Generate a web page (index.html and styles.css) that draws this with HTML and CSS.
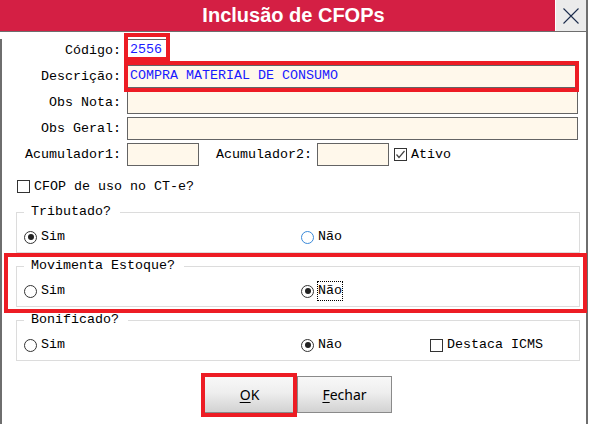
FILE: index.html
```html
<!DOCTYPE html>
<html lang="pt-BR">
<head>
<meta charset="utf-8">
<title>Inclusão de CFOPs</title>
<link rel="stylesheet" href="styles.css">
</head>
<body>
<div class="window">
  <div class="titlebar">
    <div class="title">Inclusão de CFOPs</div>
    <div class="close">
      <svg width="16" height="16" viewBox="0 0 16 16"><path d="M0.5 0.5L15.5 15.5M15.5 0.5L0.5 15.5" stroke="#1c2c4c" stroke-width="1.1" fill="none"/></svg>
    </div>
  </div>
  <div class="body">
    <div class="row first">
      <span class="label">Código:</span>
      <span class="field code">2556</span>
    </div>
    <div class="row">
      <span class="label">Descrição:</span>
      <span class="field wide">COMPRA MATERIAL DE CONSUMO</span>
    </div>
    <div class="row">
      <span class="label">Obs Nota:</span>
      <span class="field wide"></span>
    </div>
    <div class="row">
      <span class="label">Obs Geral:</span>
      <span class="field wide"></span>
    </div>
    <div class="row">
      <span class="label">Acumulador1:</span>
      <span class="field short"></span>
      <span class="label2">Acumulador2:</span>
      <span class="field short"></span>
      <span class="check checked ativo"><svg width="11" height="11" viewBox="0 0 11 11"><path d="M1.5 5.5L4 8.5L9.5 2" stroke="#444" stroke-width="1.2" fill="none"/></svg></span>
      <span class="opt-text">Ativo</span>
    </div>
    <div class="row cfop">
      <span class="check"></span>
      <span class="opt-text">CFOP de uso no CT-e?</span>
    </div>

    <fieldset class="group first-group">
      <legend>Tributado?</legend>
      <div class="options">
        <span class="opt col1"><span class="radio checked"></span><span class="opt-text">Sim</span></span>
        <span class="opt col2"><span class="radio hover"></span><span class="opt-text">Não</span></span>
      </div>
    </fieldset>

    <fieldset class="group">
      <legend>Movimenta Estoque?</legend>
      <div class="options">
        <span class="opt col1"><span class="radio"></span><span class="opt-text">Sim</span></span>
        <span class="opt col2"><span class="radio checked"></span><span class="opt-text focus">Não</span></span>
      </div>
    </fieldset>

    <fieldset class="group">
      <legend>Bonificado?</legend>
      <div class="options">
        <span class="opt col1"><span class="radio"></span><span class="opt-text">Sim</span></span>
        <span class="opt col2"><span class="radio checked"></span><span class="opt-text">Não</span></span>
        <span class="opt"><span class="check"></span><span class="opt-text">Destaca ICMS</span></span>
      </div>
    </fieldset>

    <div class="buttons">
      <button class="btn"><u>O</u>K</button>
      <button class="btn"><u>F</u>echar</button>
    </div>
  </div>

  <div class="hl hl-codigo"></div>
  <div class="hl hl-desc"></div>
  <div class="hl hl-mov"></div>
  <div class="hl hl-ok"></div>
</div>
</body>
</html>
```
FILE: styles.css
```css
* { box-sizing: border-box; }

body {
  margin: 0;
  background: #ffffff;
  font-family: "Liberation Mono", "Courier New", monospace;
  font-size: 13.33px;
  color: #000000;
}

.window {
  position: relative;
  width: 588px;
  border-right: 2px solid #6e6e6e;
}

.titlebar {
  display: flex;
  gap: 1px;
  height: 32px;
  border-bottom: 1px solid #6e6e6e;
}

.title {
  flex: 1;
  background: #d41f44;
  color: #ffffff;
  font-family: "Liberation Sans", Arial, sans-serif;
  font-weight: bold;
  font-size: 20px;
  line-height: 31px;
  text-align: center;
  padding-left: 32px;
}

.close {
  width: 30px;
  background: #ebebeb;
  display: flex;
  align-items: center;
  justify-content: center;
}

.body {
  height: 387px;
  border-left: 2px solid #6e6e6e;
  border-bottom: 2px solid #6e6e6e;
}

.row {
  display: flex;
  align-items: center;
  height: 23px;
  margin-top: 3px;
}

.row.first { margin-top: 7px; }

.label {
  width: 119px;
  margin-right: 6px;
  text-align: right;
  white-space: pre;
}

.label2 {
  margin-left: 17px;
  margin-right: 5px;
  white-space: pre;
}

.field {
  height: 23px;
  border: 1px solid #646464;
  background: #fff8eb;
  color: #1a1aff;
  padding: 2px 2px 0;
  line-height: 16px;
  white-space: pre;
  overflow: hidden;
}

.field.code { width: 40px; background: #ffffff; }
.field.wide { width: 451px; }
.field.short { width: 72px; }

.check {
  display: inline-flex;
  align-items: center;
  justify-content: center;
  width: 13px;
  height: 13px;
  border: 1px solid #333333;
  background: #ffffff;
  flex: none;
}

.check.ativo { margin-left: 5px; }

.opt-text {
  margin-left: 3px;
  border: 1px dotted transparent;
  line-height: 18px;
  white-space: pre;
}

.opt-text.focus { border-color: #000000; }

.row.cfop {
  height: 15px;
  margin-top: 13px;
  padding-left: 15px;
}

.group {
  margin: 6px 6px 0 14px;
  width: 564px;
  border: 1px solid #dcdcdc;
  padding: 0 0 6px 7px;
  min-width: 0;
}

.group.first-group { margin-top: 11px; }

.group legend {
  padding: 0 9px 0 7px;
  line-height: 14px;
  margin: 0;
}

.options {
  display: flex;
  align-items: center;
  height: 18px;
  margin-top: 9px;
}

.opt {
  display: flex;
  align-items: center;
}

.opt.col1 { width: 277px; }
.opt.col2 { width: 129px; }

.radio {
  position: relative;
  width: 13px;
  height: 13px;
  border: 1px solid #333333;
  border-radius: 50%;
  background: #ffffff;
  flex: none;
}

.radio.hover { border-color: #3b8ad9; }

.radio.checked::after {
  content: "";
  position: absolute;
  left: 2.5px;
  top: 2.5px;
  width: 6px;
  height: 6px;
  border-radius: 50%;
  background: #222222;
}

.buttons {
  display: flex;
  gap: 0;
  margin-top: 15px;
  padding-left: 200px;
}

.btn {
  width: 95px;
  height: 37px;
  border: 1px solid #8a8a8a;
  background: linear-gradient(#f8f8f8, #eeeeee 45%, #d2d2d2);
  font-family: "Noto Sans", "Open Sans", sans-serif;
  font-size: 14px;
  color: #000000;
  padding: 0;
}

.btn u { text-underline-offset: 2px; }

.hl {
  position: absolute;
  border: 4px solid #ed1c24;
  pointer-events: none;
}

.hl-codigo { left: 124px; top: 33px; width: 46px; height: 28px; }
.hl-desc { left: 124px; top: 61px; width: 455px; height: 31px; }
.hl-mov { left: 4px; top: 253px; width: 583px; height: 60px; }
.hl-ok { left: 201px; top: 373px; width: 96px; height: 44px; }
```
